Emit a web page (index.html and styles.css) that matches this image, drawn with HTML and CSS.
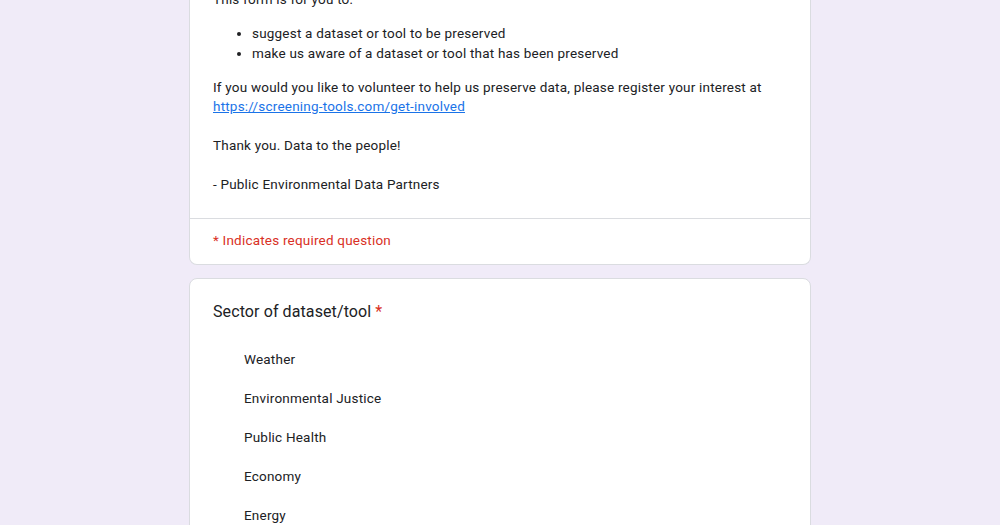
FILE: index.html
```html
<!DOCTYPE html>
<html>
<head>
<meta charset="utf-8">
<link rel="stylesheet" href="styles.css">
</head>
<body>
<div class="page">
  <div class="card intro">
    <div class="desc">
      <p class="para">This form is for you to:</p>
      <ul class="list">
        <li>suggest a dataset or tool to be preserved</li>
        <li>make us aware of a dataset or tool that has been preserved</li>
      </ul>
      <p class="para">If you would you like to volunteer to help us preserve data, please register your interest at <a class="link" href="#">https://screening-tools.com/get-involved</a><br><br>Thank you. Data to the people!<br><br>- Public Environmental Data Partners</p>
    </div>
    <div class="required">* Indicates required question</div>
  </div>
  <div class="card question">
    <div class="q-title">Sector of dataset/tool <span class="star">*</span></div>
    <div class="options">
      <div class="option">Weather</div>
      <div class="option">Environmental Justice</div>
      <div class="option">Public Health</div>
      <div class="option">Economy</div>
      <div class="option">Energy</div>
    </div>
  </div>
</div>
</body>
</html>
```

FILE: styles.css
```css
html, body {
  margin: 0;
  padding: 0;
  background: #f0ebf8;
  overflow: hidden;
}
.page {
  width: 622px;
  margin: -10px auto 0;
  display: flex;
  flex-direction: column;
  gap: 13px;
  font-family: Roboto, "Liberation Sans", sans-serif;
  color: #202124;
}
.card {
  background: #fff;
  border: 1px solid #dadce0;
  border-radius: 8px;
}
.intro {
  border-top: none;
  border-top-left-radius: 0;
  border-top-right-radius: 0;
}
.desc {
  padding: 0 23px 23px;
  border-bottom: 1px solid #dadce0;
  font-size: 13.5px;
  line-height: 19.5px;
  letter-spacing: 0.2px;
}
.para {
  margin: 0;
}
.list {
  margin: 14.5px 0;
  padding-left: 39px;
}
.link {
  color: #1a73e8;
  text-decoration: underline;
}
.required {
  padding: 11px 23px 14px;
  color: #d93025;
  font-size: 13.5px;
  line-height: 20px;
  letter-spacing: 0.2px;
}
.question {
  padding: 22px 23px 60px;
}
.q-title {
  font-size: 16px;
  line-height: 22px;
  letter-spacing: 0.1px;
  color: #202124;
}
.star {
  color: #d93025;
}
.options {
  display: flex;
  flex-direction: column;
  gap: 19px;
  padding: 26px 0 0 31px;
}
.option {
  font-size: 13.5px;
  line-height: 20px;
  letter-spacing: 0.2px;
}
```
